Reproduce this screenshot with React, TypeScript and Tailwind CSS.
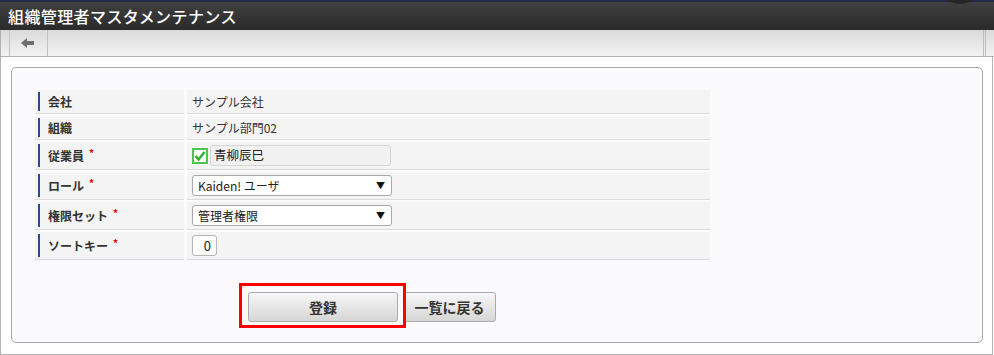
import React from "react";

type Row = { label: string; required?: boolean; tall?: boolean; value: React.ReactNode };

const Req = () => <span className="relative -top-[3px] ml-[5px] text-[10px] font-bold text-[#e00000]">*</span>;

const Select = ({ text }: { text: string }) => (
  <div className="flex h-[21px] w-[200px] items-center justify-between rounded-[3px] border border-[#a9a9a9] bg-white pl-[5px] pr-[6px] text-[12px] text-[#222]">
    <span>{text}</span>
    <span className="text-[9px] text-[#111]">▼</span>
  </div>
);

const CheckIcon = () => (
  <svg width="16" height="16" viewBox="0 0 16 16">
    <rect x="1" y="1" width="14" height="14" fill="#fff" stroke="#4cc64c" strokeWidth="2" />
    <path d="M3.5 8 L6.5 11.5 L12.5 4" fill="none" stroke="#36b036" strokeWidth="2.6" />
  </svg>
);

const rows: Row[] = [
  { label: "会社", value: <span>サンプル会社</span> },
  { label: "組織", value: <span>サンプル部門02</span> },
  {
    label: "従業員",
    required: true,
    tall: true,
    value: (
      <div className="flex items-center gap-[2px]">
        <CheckIcon />
        <div className="flex h-[21px] w-[181px] items-center rounded-[3px] border border-[#d6d6d6] bg-[#f1f1f1] pl-[3px] text-[12.5px] text-[#222]">
          青柳辰巳
        </div>
      </div>
    ),
  },
  { label: "ロール", required: true, tall: true, value: <Select text="Kaiden! ユーザ" /> },
  { label: "権限セット", required: true, tall: true, value: <Select text="管理者権限" /> },
  {
    label: "ソートキー",
    required: true,
    tall: true,
    value: (
      <div className="flex h-[21px] w-[25px] items-center justify-end rounded-[3px] border border-[#b5b5b5] bg-white pr-[5px] text-[13px] text-[#222]">
        0
      </div>
    ),
  },
];

export default function App() {
  return (
    <div className="relative h-[355px] w-[994px] overflow-hidden bg-white font-['Noto_Sans_CJK_JP',sans-serif]">
      {/* header */}
      <div className="relative flex h-[30px] items-center border-t-2 border-[#1e2a48] bg-gradient-to-b from-[#404040] to-[#2a2a2a] pl-[8px] text-[16px] font-medium tracking-[0.4px] text-white">
        組織管理者マスタメンテナンス
        <div className="absolute left-[937px] top-[-44px] h-[46px] w-[46px] rounded-full bg-[#262626]" />
      </div>

      {/* toolbar */}
      <div className="flex h-[27px] border-b border-l border-[#b2b2b2] bg-gradient-to-b from-[#dadada] to-[#f3f3f3]">
        <div className="ml-[8px] flex w-[39px] items-center justify-center border-x border-[#c2c2c2]">
          <svg width="13" height="10" viewBox="0 0 13 10" className="mr-[2px]">
            <polygon points="0,5 6,0 6,10" fill="#6e6e6e" />
            <rect x="5" y="3" width="8" height="4" fill="#6e6e6e" />
          </svg>
        </div>
        <div className="ml-auto mr-[8px] flex gap-[1px]">
          <div className="border-l border-[#bcbcbc]" />
          <div className="w-px border-l border-[#bcbcbc]" />
        </div>
      </div>

      {/* body */}
      <div className="h-[298px] w-[993px] border-x border-b border-[#b4b4b4] pb-[10px] pl-[10px] pr-[9px] pt-[10px]">
        <div className="h-[276px] rounded-[5px] border border-[#a8a8a8] bg-[#fbfbfe] pl-[23px] pt-[22px]">
          <div className="flex w-[675px] flex-col gap-[2px]">
            {rows.map((r, i) => (
              <div key={`row-${i}`} className={`flex ${r.tall ? "h-[28px]" : "h-[24px]"}`}>
                <div className="flex w-[149px] border-b border-[#dadada] bg-[#f4f4f4] py-[2px] pl-[3px]">
                  <div className="flex flex-1 items-center border-l-2 border-[#2e4c8c] pl-[8px] text-[12px] font-bold text-[#333]">
                    {r.label}
                    {r.required && <Req />}
                  </div>
                </div>
                <div className="ml-[3px] flex flex-1 items-center border-b border-[#dadada] bg-[#f4f4f4] pl-[5px] text-[12px] text-[#333]">
                  {r.value}
                </div>
              </div>
            ))}
          </div>

          <div className="ml-[213px] mt-[32px] flex gap-[5px]">
            <div className="relative">
              <button className="h-[30px] w-[150px] rounded-[3px] border border-[#ababab] bg-gradient-to-b from-[#f7f7f7] to-[#d6d6d6] text-[14px] font-bold text-[#333]">
                登録
              </button>
              <div className="absolute left-[-9px] top-[-9px] h-[45px] w-[167px] border-[3px] border-[#ff0000]" />
            </div>
            <button className="h-[30px] w-[93px] rounded-[3px] border border-[#ababab] bg-gradient-to-b from-[#f7f7f7] to-[#d6d6d6] text-[14px] font-bold text-[#333]">
              一覧に戻る
            </button>
          </div>
        </div>
      </div>
    </div>
  );
}
